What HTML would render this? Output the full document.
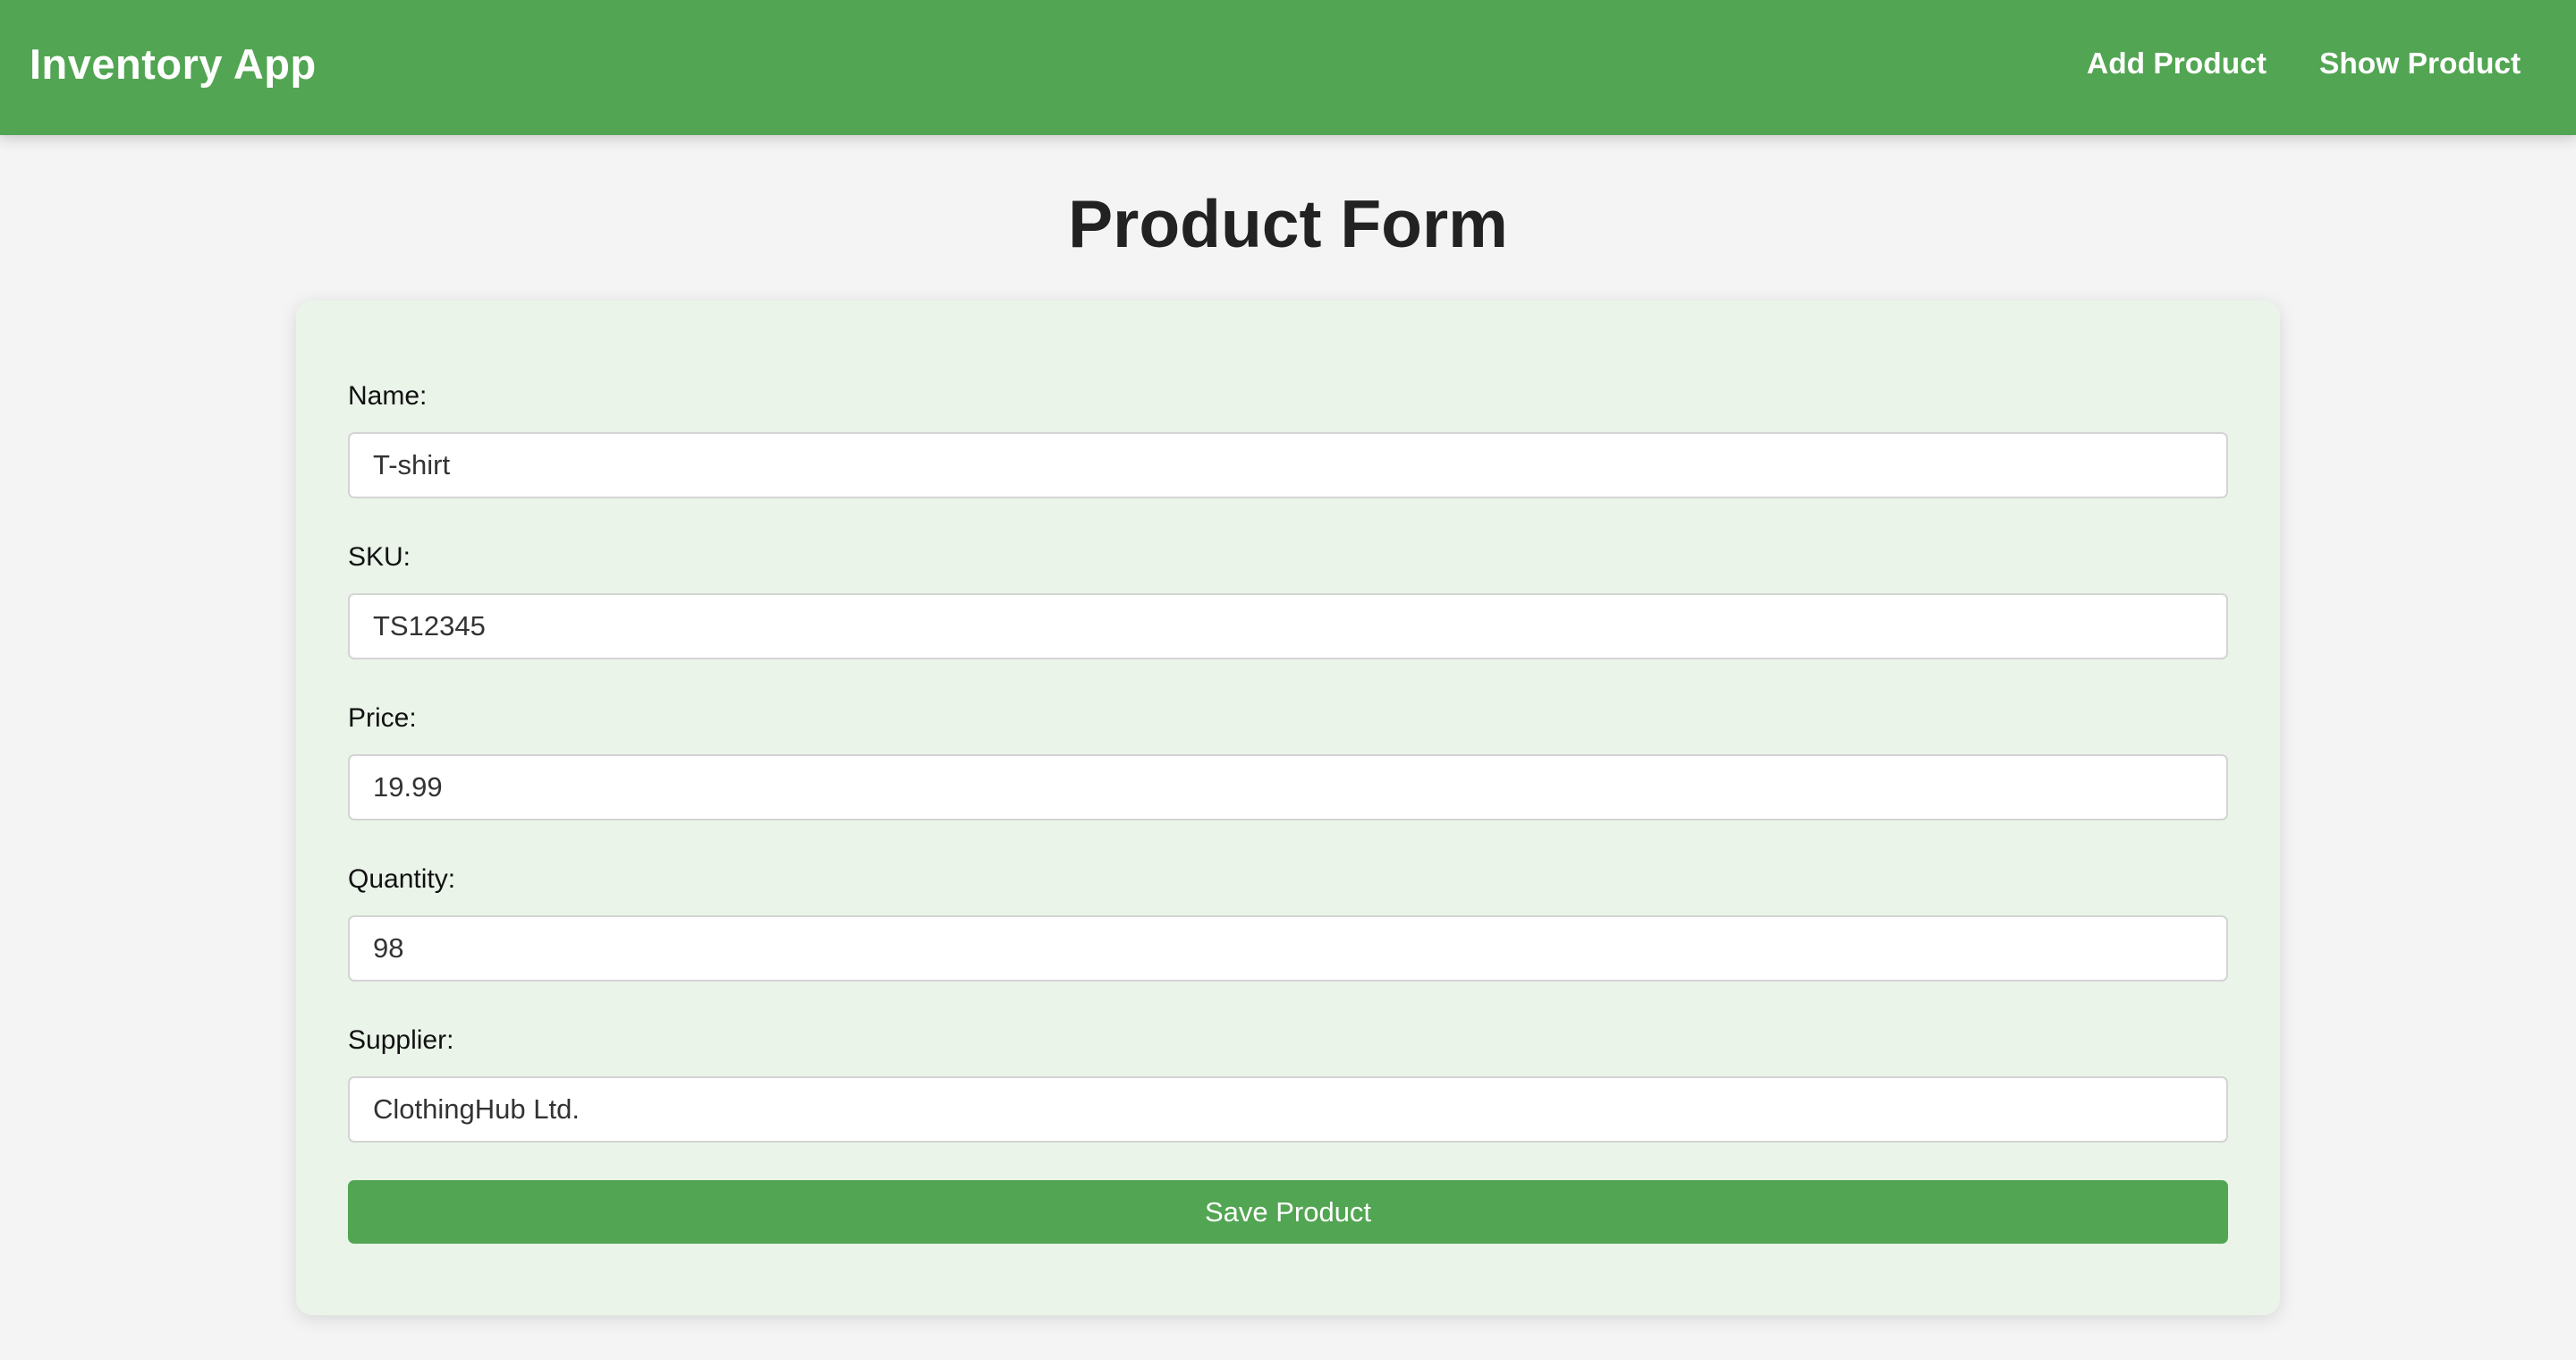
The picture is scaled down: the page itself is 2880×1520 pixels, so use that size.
<!DOCTYPE html>
<html><head><meta charset="utf-8"><style>
*{box-sizing:border-box;margin:0;padding:0}
body{width:2880px;height:1520px;background:#f4f4f4;font-family:"Liberation Sans",sans-serif;position:relative;overflow:hidden}
.nav{position:absolute;left:0;top:0;width:2880px;height:151px;background:#52a552;box-shadow:0 4px 14px rgba(0,0,0,.18)}
.brand{position:absolute;left:33px;top:44px;font-size:47px;font-weight:bold;color:#fff;line-height:56px;letter-spacing:0.5px}
.link{position:absolute;top:50px;font-size:33.5px;font-weight:bold;color:#fff;line-height:44px}
h1{position:absolute;left:0;width:2880px;top:202px;text-align:center;font-size:75px;font-weight:bold;color:#222;line-height:96px}
.card{position:absolute;left:331px;top:336px;width:2218px;height:1134px;background:#eaf4e9;border-radius:18px;box-shadow:0 4px 20px rgba(0,0,0,.12)}
.lbl{position:absolute;left:389px;font-size:30px;color:#111;line-height:40px}
.inp{position:absolute;left:389px;width:2102px;height:74px;background:#fff;border:2px solid #d4d4d4;border-radius:7px;font-size:31px;color:#333;line-height:70px;padding-left:26px}
.btn{position:absolute;left:389px;top:1319px;width:2102px;height:71px;background:#52a552;border-radius:7px;color:#fff;font-size:31px;text-align:center;line-height:71px}
</style></head><body>
<div class="nav"><div class="brand">Inventory App</div>
<div class="link" style="left:2333px">Add Product</div>
<div class="link" style="left:2593px">Show Product</div></div>
<h1>Product Form</h1>
<div class="card"></div>
<div class="lbl" style="top:423px">Name:</div><div class="inp" style="top:483px">T-shirt</div>
<div class="lbl" style="top:603px">SKU:</div><div class="inp" style="top:663px">TS12345</div>
<div class="lbl" style="top:783px">Price:</div><div class="inp" style="top:843px">19.99</div>
<div class="lbl" style="top:963px">Quantity:</div><div class="inp" style="top:1023px">98</div>
<div class="lbl" style="top:1143px">Supplier:</div><div class="inp" style="top:1203px">ClothingHub Ltd.</div>
<div class="btn">Save Product</div>
</body></html>
